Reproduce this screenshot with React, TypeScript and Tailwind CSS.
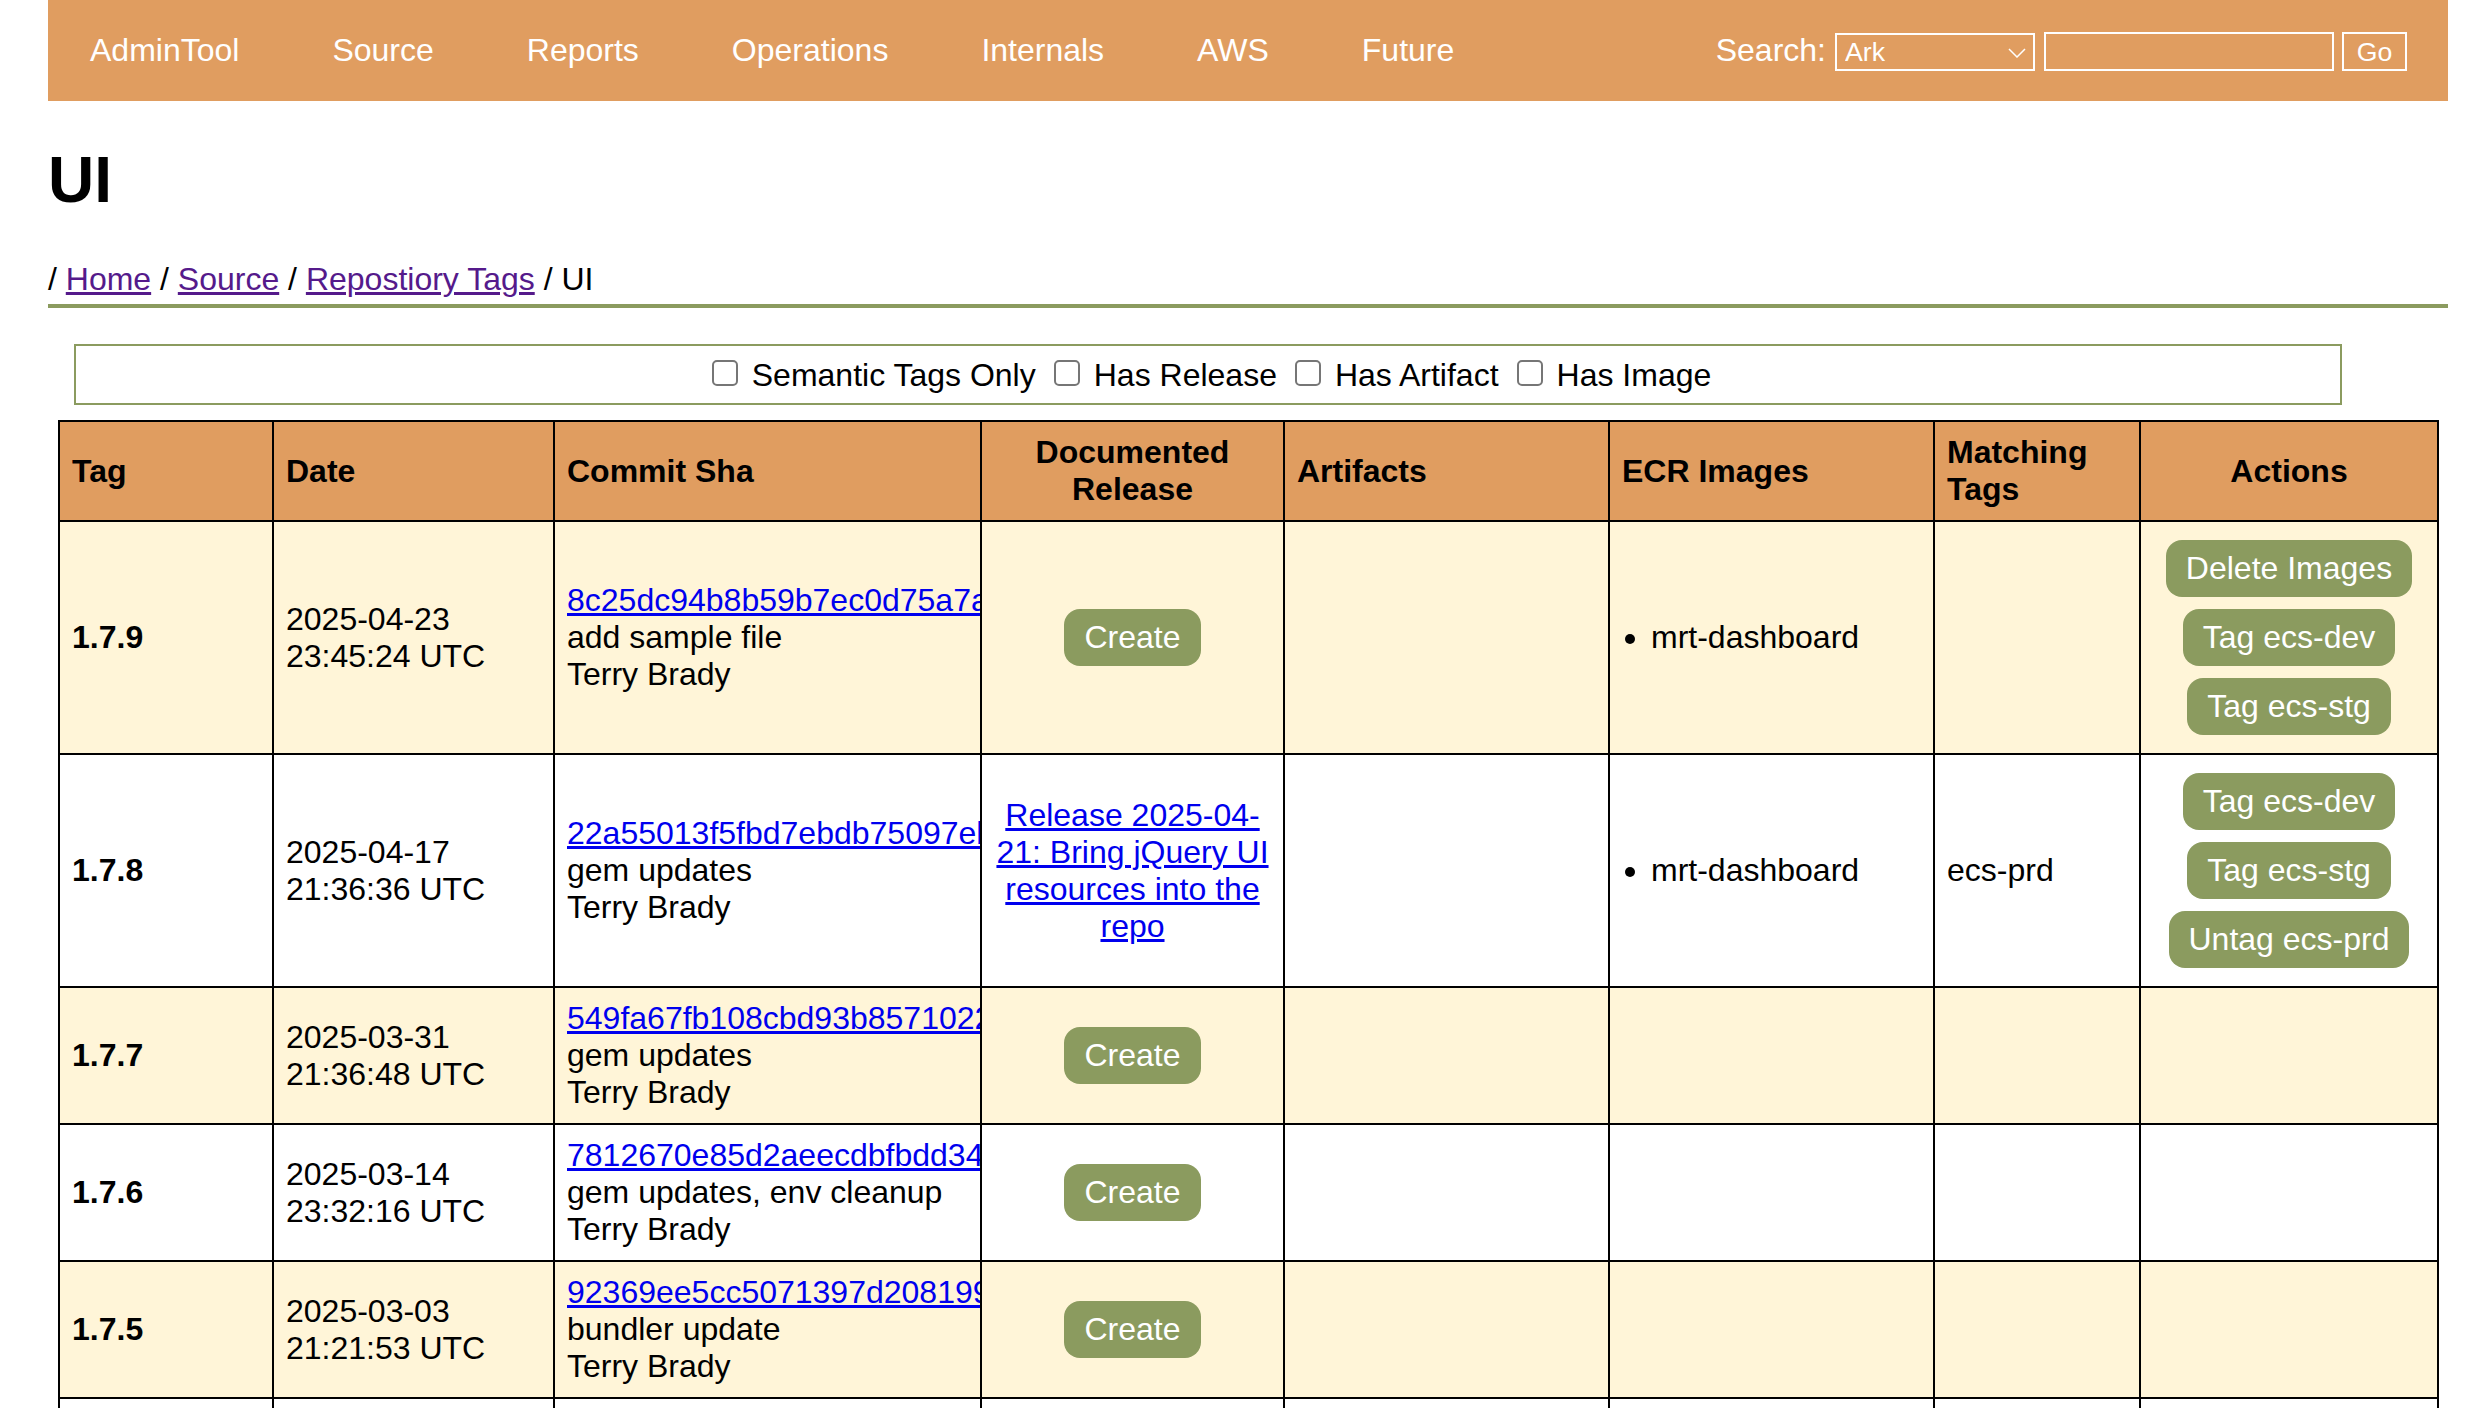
import React from "react";

const Btn = ({ children }: { children: React.ReactNode }) => (
  <button className="block mx-auto w-fit rounded-[16px] bg-[#8b9b5f] px-5 py-[10px] text-[32px] leading-[37px] text-white">
    {children}
  </button>
);

const rows = [
  { tag: "1.7.9", d: "2025-04-23", t: "23:45:24 UTC", sha: "8c25dc94b8b59b7ec0d75a7a1f0c6d3e92b4a7e1", msg: "add sample file", images: true, match: "", actions: ["Delete Images", "Tag ecs-dev", "Tag ecs-stg"] },
  { tag: "1.7.8", d: "2025-04-17", t: "21:36:36 UTC", sha: "22a55013f5fbd7ebdb75097eb4c1d07a6e93f258", msg: "gem updates", images: true, match: "ecs-prd", release: "Release 2025-04-21: Bring jQuery UI resources into the repo", actions: ["Tag ecs-dev", "Tag ecs-stg", "Untag ecs-prd"] },
  { tag: "1.7.7", d: "2025-03-31", t: "21:36:48 UTC", sha: "549fa67fb108cbd93b85710228e3c9d4a1b7f605", msg: "gem updates", images: false, match: "", actions: [] },
  { tag: "1.7.6", d: "2025-03-14", t: "23:32:16 UTC", sha: "7812670e85d2aeecdbfbdd34a9c05e17b2f6d843", msg: "gem updates, env cleanup", images: false, match: "", actions: [] },
  { tag: "1.7.5", d: "2025-03-03", t: "21:21:53 UTC", sha: "92369ee5cc5071397d2081993fa7c4e6d05b1e82", msg: "bundler update", images: false, match: "", actions: [] },
];

const Check = ({ label }: { label: string }) => (
  <label className="flex items-center gap-[14px]">
    <input type="checkbox" className="mb-[5px] h-[26px] w-[26px] appearance-none rounded-[5px] border-2 border-[#767676] bg-white" />
    <span>{label}</span>
  </label>
);

const navItems = ["AdminTool", "Source", "Reports", "Operations", "Internals", "AWS", "Future"];
const cell = "border-2 border-black px-3 py-3 align-middle";
const head = "border-2 border-black bg-[#e09d60] px-3 py-3 align-middle font-bold";

export default function App() {
  return (
    <div className="h-[1408px] overflow-hidden bg-white pl-12 pr-[42px] font-['Liberation_Sans',Arial,sans-serif] text-[32px] leading-[37px] text-black">
      <nav className="flex h-[101px] items-center justify-between bg-[#e09d60] pl-[42px] pr-[41px] text-white">
        <div className="flex gap-[93px]">
          {navItems.map((n) => (
            <a key={n}>{n}</a>
          ))}
        </div>
        <form className="flex items-center">
          <span className="mr-[9px]">Search:</span>
          <div className="relative mr-[9px] mt-[2px]">
            <select className="block h-[38px] w-[200px] appearance-none rounded-none border-2 border-white bg-transparent pl-[8px] text-[26.67px] leading-[30px] text-white">
              <option>Ark</option>
            </select>
            <svg className="absolute right-[9px] top-[15px] h-[10px] w-[18px]" viewBox="0 0 18 10" fill="none" stroke="#fff" strokeWidth="1.5">
              <path d="M1 1l8 8 8-8" />
            </svg>
          </div>
          <input className="mr-2 mt-[2px] h-[39px] w-[290px] border-2 border-white bg-transparent" />
          <button type="button" className="mt-[2px] h-[39px] w-[65px] border-2 border-white text-[26.67px] leading-[30px] text-white">
            Go
          </button>
        </form>
      </nav>

      <h1 className="mt-[42px] text-[64px] font-bold leading-[74px]">UI</h1>

      <div className="mt-[44px] border-b-4 border-[#8b9b5f] pb-[6px]">
        / <a className="text-[#551a8b] underline">Home</a> / <a className="text-[#551a8b] underline">Source</a> / <a className="text-[#551a8b] underline">Repostiory Tags</a> / UI
      </div>

      <div className="ml-[26px] mt-[36px] flex h-[61px] w-[2268px] items-center justify-center gap-[18px] border-2 border-[#8b9b5f] pl-[7px] pt-[2px]">
        <Check label="Semantic Tags Only" />
        <Check label="Has Release" />
        <Check label="Has Artifact" />
        <Check label="Has Image" />
      </div>

      <table className="ml-[10px] mt-[15px] w-[2379px] table-fixed border-collapse">
        <colgroup>
          <col className="w-[214px]" />
          <col className="w-[281px]" />
          <col className="w-[427px]" />
          <col className="w-[303px]" />
          <col className="w-[325px]" />
          <col className="w-[325px]" />
          <col className="w-[206px]" />
          <col className="w-[298px]" />
        </colgroup>
        <thead>
          <tr>
            <th className={`${head} text-left`}>Tag</th>
            <th className={`${head} text-left`}>Date</th>
            <th className={`${head} text-left`}>Commit Sha</th>
            <th className={`${head} text-center`}>Documented Release</th>
            <th className={`${head} text-left`}>Artifacts</th>
            <th className={`${head} text-left`}>ECR Images</th>
            <th className={`${head} text-left`}>Matching Tags</th>
            <th className={`${head} text-center`}>Actions</th>
          </tr>
        </thead>
        <tbody>
          {rows.map((r, i) => (
            <tr key={r.tag} className={i % 2 === 0 ? "bg-[#fff5d8]" : "bg-white"}>
              <td className={`${cell} font-bold`}>{r.tag}</td>
              <td className={cell}>
                {r.d}
                <br />
                {r.t}
              </td>
              <td className={`${cell} overflow-hidden whitespace-nowrap`}>
                <a className="text-[#0000ee] underline">{r.sha}</a>
                <br />
                {r.msg}
                <br />
                Terry Brady
              </td>
              <td className={`${cell} text-center`}>
                {r.release ? <a className="text-[#0000ee] underline">{r.release}</a> : <Btn>Create</Btn>}
              </td>
              <td className={cell}></td>
              <td className={cell}>
                {r.images && (
                  <ul className="list-disc pl-[29px]">
                    <li>mrt-dashboard</li>
                  </ul>
                )}
              </td>
              <td className={cell}>{r.match}</td>
              <td className={cell}>
                {r.actions.length > 0 && (
                  <div className="my-[6px] flex flex-col gap-3">
                    {r.actions.map((a) => (
                      <Btn key={a}>{a}</Btn>
                    ))}
                  </div>
                )}
              </td>
            </tr>
          ))}
          <tr className="h-[137px] bg-white">
            {Array.from({ length: 8 }).map((_, i) => (
              <td key={i} className={cell}></td>
            ))}
          </tr>
        </tbody>
      </table>
    </div>
  );
}
